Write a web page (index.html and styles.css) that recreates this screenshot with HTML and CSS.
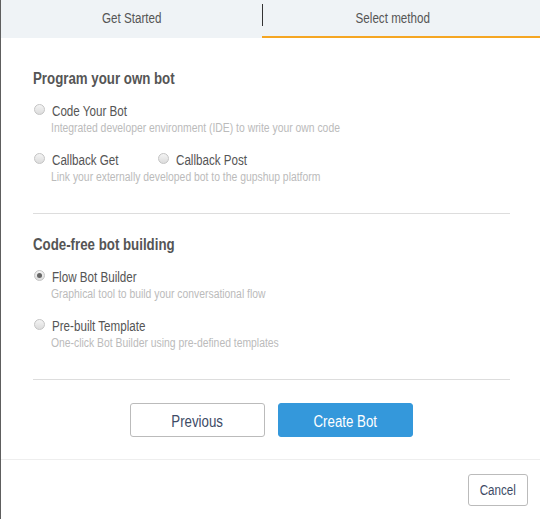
FILE: index.html
```html
<!DOCTYPE html>
<html lang="en">
<head>
  <meta charset="UTF-8" />
  <title>Create Bot</title>
  <link rel="stylesheet" href="styles.css">
</head>
<body>
  <div class="modal">
    <div class="tabs">
      <div class="tab"><span class="narrow">Get Started</span></div>
      <div class="tab-sep"></div>
      <div class="tab tab-active"><span class="narrow">Select method</span></div>
    </div>

    <div class="modal-body">
      <h2 class="section-title">Program your own bot</h2>

      <div class="option">
        <label class="radio-row">
          <span class="radio"></span>
          <span class="radio-label">Code Your Bot</span>
        </label>
        <div class="hint">Integrated developer environment (IDE) to write your own code</div>
      </div>

      <div class="option">
        <div class="radio-group">
          <label class="radio-row">
            <span class="radio"></span>
            <span class="radio-label">Callback Get</span>
          </label>
          <label class="radio-row">
            <span class="radio"></span>
            <span class="radio-label">Callback Post</span>
          </label>
        </div>
        <div class="hint">Link your externally developed bot to the gupshup platform</div>
      </div>

      <hr class="divider">

      <h2 class="section-title">Code-free bot building</h2>

      <div class="option">
        <label class="radio-row">
          <span class="radio checked"></span>
          <span class="radio-label">Flow Bot Builder</span>
        </label>
        <div class="hint">Graphical tool to build your conversational flow</div>
      </div>

      <div class="option">
        <label class="radio-row">
          <span class="radio"></span>
          <span class="radio-label">Pre-built Template</span>
        </label>
        <div class="hint">One-click Bot Builder using pre-defined templates</div>
      </div>

      <hr class="divider">

      <div class="actions">
        <button class="btn btn-default"><span class="narrow">Previous</span></button>
        <button class="btn btn-primary"><span class="narrow">Create Bot</span></button>
      </div>
    </div>

    <div class="modal-footer">
      <button class="btn btn-cancel"><span class="narrow">Cancel</span></button>
    </div>
  </div>
</body>
</html>
```

FILE: styles.css
```css
html, body {
  margin: 0;
  padding: 0;
  height: 100%;
}

body {
  background: #5e5e5e; /* backdrop peeking on the left */
  font-family: "Liberation Sans", Arial, sans-serif;
  color: #555;
}

/* no condensed face installed, so squeeze the regular one */
.narrow {
  display: inline-block;
  transform: scaleX(0.83);
}

.modal {
  margin-left: 1px;
  background: #fff;
  min-height: 100%;
}

/* header tabs */
.tabs {
  display: flex;
  align-items: center;
  height: 38px;
  background: #eff3f6;
}
.tab {
  height: 38px;
  line-height: 36px;
  font-size: 14px;
  color: #555;
  text-align: center;
  box-sizing: border-box;
}
.tab:first-child {
  width: 261px;
}
.tab-sep {
  width: 1px;
  height: 22px;
  margin-top: -8px;
  background: #333;
}
.tab-active {
  flex: 1;
  margin-left: -1px;
  padding-right: 17px;
  border-bottom: 2px solid #f5a623;
}

/* body */
.modal-body {
  padding: 31px 30px 22px 32px;
}

.section-title {
  margin: 0 0 14px;
  font-size: 16px;
  line-height: 20px;
  font-weight: bold;
  color: #555;
  transform: scaleX(0.83);
  transform-origin: left center;
}

.option + .option {
  margin-top: 17px;
}

.radio-group {
  display: flex;
  gap: 25px;
}

.radio-row {
  display: flex;
  align-items: center;
  height: 16px;
}
.radio {
  width: 9px;
  height: 9px;
  margin: -3px 7px 0 1px;
  border: 1px solid #c4c4c4;
  border-radius: 50%;
  background: linear-gradient(#f4f4f4, #dcdcdc);
  position: relative;
}
.radio.checked::after {
  content: "";
  position: absolute;
  left: 2px;
  top: 2px;
  width: 5px;
  height: 5px;
  border-radius: 50%;
  background: #666;
}
.radio-label {
  font-size: 14px;
  line-height: 16px;
  color: #555;
  transform: scaleX(0.83);
  transform-origin: left center;
}

.hint {
  margin: 2px 0 0 18px;
  font-size: 12.5px;
  line-height: 14px;
  color: #bbb;
  transform: scaleX(0.83);
  transform-origin: left center;
}

.divider {
  margin: 29px 0 21px;
  border: 0;
  border-top: 1px solid #ddd;
  height: 0;
}

.actions {
  display: flex;
  justify-content: center;
  gap: 13px;
  margin-top: -21px;
  padding-top: 23px;
}

.btn {
  font-family: inherit;
  cursor: pointer;
  border-radius: 3px;
  padding: 0;
}
.btn-default,
.btn-primary {
  width: 135px;
  height: 34px;
  padding-top: 3px;
  font-size: 16px;
}
.btn-default {
  background: #fff;
  border: 1px solid #bbb;
  color: #3d4b66;
}
.btn-primary {
  background: #3498db;
  border: 1px solid #3498db;
  color: #fff;
}

.modal-footer {
  display: flex;
  justify-content: flex-end;
  border-top: 1px solid #eee;
  padding: 14px 12px 13px 0;
}
.btn-cancel {
  width: 60px;
  height: 32px;
  font-size: 14px;
  background: #fff;
  border: 1px solid #bbb;
  color: #3d4b66;
}
```
